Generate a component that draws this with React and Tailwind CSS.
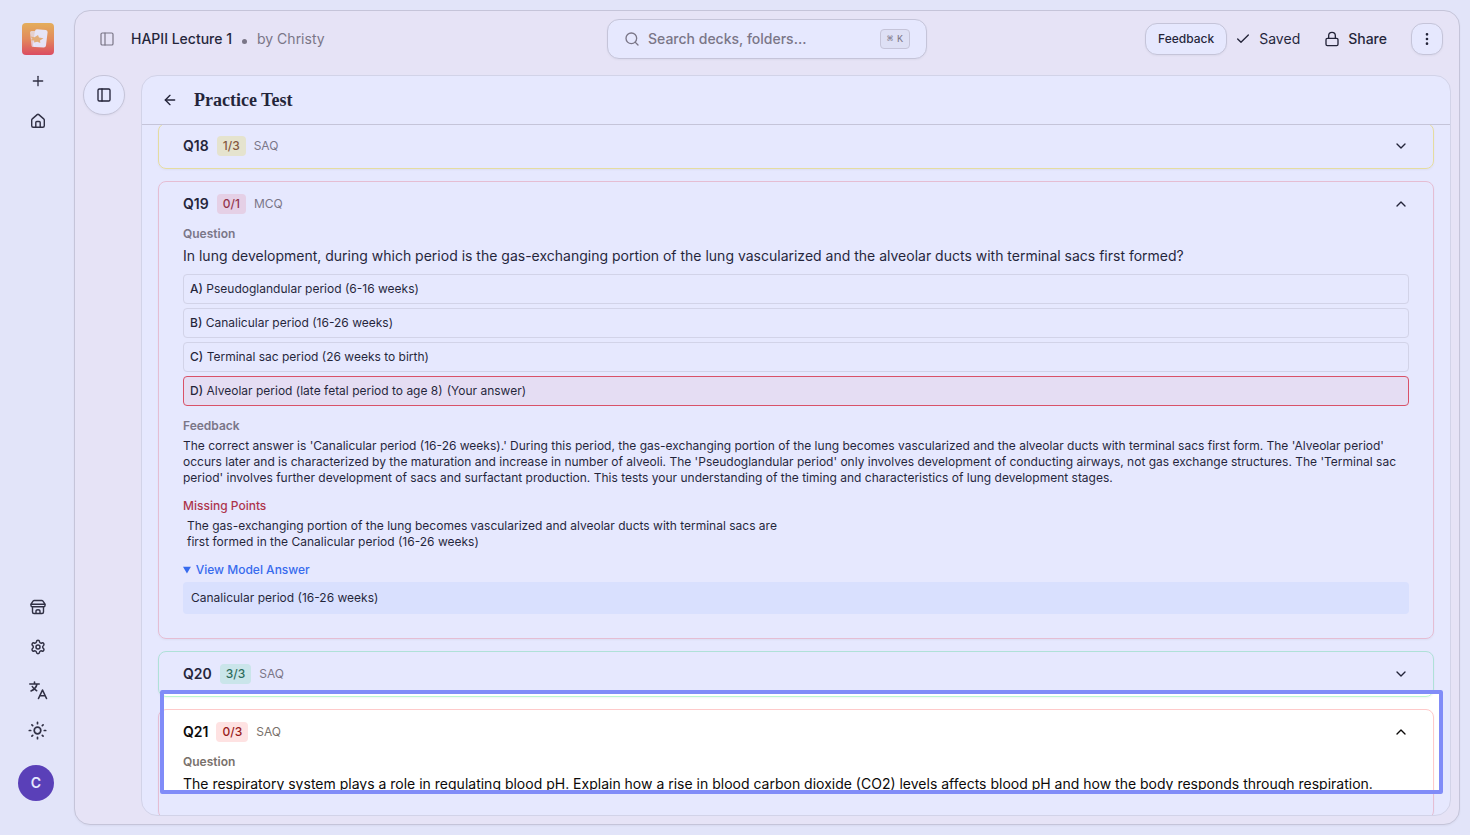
import { useState } from "react";
import {
  ArrowLeft,
  Check,
  ChevronDown,
  ChevronUp,
  EllipsisVertical,
  Lock,
  PanelLeft,
  Plus,
  Search,
} from "lucide-react";

const SCORE_STYLES = {
  none: { card: "border-[#fecaca]", badge: "bg-[#fee2e2] text-[#991b1b]" },
  partial: { card: "border-[#fef08a]", badge: "bg-[#fef9c3] text-[#854d0e]" },
  full: { card: "border-[#bbf7d0]", badge: "bg-[#dcfce7] text-[#166534]" },
};

const QUESTIONS = [
  { number: 18, score: "1/3", type: "SAQ", result: "partial" },
  {
    number: 19,
    score: "0/1",
    type: "MCQ",
    result: "none",
    open: true,
    text: "In lung development, during which period is the gas-exchanging portion of the lung vascularized and the alveolar ducts with terminal sacs first formed?",
    options: [
      { key: "A", label: "Pseudoglandular period (6-16 weeks)" },
      { key: "B", label: "Canalicular period (16-26 weeks)" },
      { key: "C", label: "Terminal sac period (26 weeks to birth)" },
      { key: "D", label: "Alveolar period (late fetal period to age 8)", chosen: true },
    ],
    feedback:
      "The correct answer is 'Canalicular period (16-26 weeks).' During this period, the gas-exchanging portion of the lung becomes vascularized and the alveolar ducts with terminal sacs first form. The 'Alveolar period' occurs later and is characterized by the maturation and increase in number of alveoli. The 'Pseudoglandular period' only involves development of conducting airways, not gas exchange structures. The 'Terminal sac period' involves further development of sacs and surfactant production. This tests your understanding of the timing and characteristics of lung development stages.",
    missing:
      "The gas-exchanging portion of the lung becomes vascularized and alveolar ducts with terminal sacs are first formed in the Canalicular period (16-26 weeks)",
    model: "Canalicular period (16-26 weeks)",
  },
  { number: 20, score: "3/3", type: "SAQ", result: "full" },
  {
    number: 21,
    score: "0/3",
    type: "SAQ",
    result: "none",
    open: true,
    text: "The respiratory system plays a role in regulating blood pH. Explain how a rise in blood carbon dioxide (CO2) levels affects blood pH and how the body responds through respiration.",
  },
];

function Logo() {
  return (
    <svg viewBox="0 0 32 32" className="size-8" aria-hidden="true">
      <defs>
        <linearGradient id="logo-bg" x1="0" y1="0" x2="0" y2="1">
          <stop offset="0" stopColor="#fdb735" />
          <stop offset="0.5" stopColor="#fb8a35" />
          <stop offset="1" stopColor="#f23c3c" />
        </linearGradient>
      </defs>
      <rect width="32" height="32" rx="4" fill="url(#logo-bg)" />
      <path d="M8 9.500q0-1.500 1.500-1.500H13v16h-2q-1.300 0-1.500-1.500z" fill="#fff" opacity="0.7" />
      <path d="M13 8q.2-2 2.200-1.800l8.600.8q2 .2 1.800 2.200L24 22.500q-.3 2-2.200 2L13 24q-2-.1-2-2z" fill="#fff" opacity="0.95" />
      <path d="M8.500 13.500l4 .8 3.500-2.300 1 2.500 4.500.7-3.500 2.300.3 2.500-3-1.200-3.300.7.200-2-3.700-.3 2-1.500z" fill="#fbb659" />
    </svg>
  );
}

function HomeIcon() {
  return (
    <svg viewBox="0 0 16 16" className="size-4" fill="none" stroke="currentColor" strokeWidth="1.4" strokeLinecap="round" strokeLinejoin="round" aria-hidden="true">
      <path d="M1.700 7.200q0-.8.6-1.300L7.200 1.600q.8-.7 1.600 0l4.900 4.300q.6.5.6 1.300v5.600q0 1.500-1.500 1.500H3.200q-1.500 0-1.500-1.500z" />
      <path d="M5.800 14.200V9.500q0-1 1-1h2.400q1 0 1 1v4.700" />
    </svg>
  );
}

function StoreIcon() {
  return (
    <svg viewBox="0 0 16 16" className="size-4" fill="none" stroke="currentColor" strokeWidth="1.4" strokeLinecap="round" strokeLinejoin="round" aria-hidden="true">
      <path d="M1 5.200 3 2.200Q3.500 1.500 4.300 1.500h7.400q.8 0 1.300.7l2 3z" />
      <path d="M1 5.500v1q0 1.200 1.200 1.200h11.600Q15 7.700 15 6.500v-1" />
      <path d="M2.500 8v5q0 1.500 1.500 1.500h8q1.500 0 1.500-1.500V8" />
      <path d="M6 14.300v-2q0-1.600 2-1.600t2 1.600v2" />
    </svg>
  );
}

function SettingsIcon() {
  return (
    <svg viewBox="0 0 24 24" className="size-4" fill="none" stroke="currentColor" strokeWidth="2.200" strokeLinecap="round" strokeLinejoin="round" aria-hidden="true">
      <path d="M9.671 4.136a2.340 2.340 0 0 1 4.659 0 2.340 2.340 0 0 0 3.319 1.915 2.340 2.340 0 0 1 2.330 4.033 2.340 2.340 0 0 0 0 3.831 2.340 2.340 0 0 1-2.330 4.033 2.340 2.340 0 0 0-3.319 1.915 2.340 2.340 0 0 1-4.659 0 2.340 2.340 0 0 0-3.320-1.915 2.340 2.340 0 0 1-2.330-4.033 2.340 2.340 0 0 0 0-3.831A2.340 2.340 0 0 1 6.350 6.051a2.340 2.340 0 0 0 3.319-1.915" />
      <circle cx="12" cy="12" r="3" />
    </svg>
  );
}

function LanguageIcon() {
  return (
    <svg viewBox="0 0 20 20" className="size-5" fill="none" stroke="currentColor" strokeWidth="1.600" strokeLinecap="round" strokeLinejoin="round" aria-hidden="true">
      <path d="M1.800 4h9.400M6.500 2v2M9 4c-.6 3-2.800 5.500-6 7M4.300 6.500c.9 1.800 2.500 3.300 4.400 4.200" />
      <path d="M10.500 18.500l4-8.500 4 8.500M11.800 15.800h5.400" />
    </svg>
  );
}

function SunIcon() {
  return (
    <svg viewBox="0 0 20 20" className="size-5" fill="none" stroke="currentColor" strokeWidth="1.700" strokeLinecap="round" aria-hidden="true">
      <circle cx="9.500" cy="10.500" r="3.300" />
      <path d="M9.500 2.300v1.400M9.500 17.300v1.400M1.300 10.500h1.400M16.300 10.500h1.400M3.900 4.900l.8.8M14.300 15.300l.8.8M15.100 4.900l-.8.8M4.700 15.300l-.8.8" />
    </svg>
  );
}

function SideButton({ label, children }) {
  return (
    <button type="button" aria-label={label} className="flex size-10 items-center justify-center text-[#1c1917]">
      {children}
    </button>
  );
}

function Sidebar() {
  return (
    <nav className="flex w-[74px] shrink-0 flex-col items-center pt-[23px] pb-[34px] pl-0.5">
      <a href="#home" aria-label="Home" className="mb-1.5">
        <Logo />
      </a>
      <SideButton label="Create">
        <Plus className="size-4" />
      </SideButton>
      <SideButton label="Dashboard">
        <HomeIcon />
      </SideButton>
      <div className="flex-1" />
      <SideButton label="Store">
        <StoreIcon />
      </SideButton>
      <SideButton label="Settings">
        <SettingsIcon />
      </SideButton>
      <div className="h-[3px]" />
      <SideButton label="Language">
        <LanguageIcon />
      </SideButton>
      <SideButton label="Theme">
        <SunIcon />
      </SideButton>
      <button
        type="button"
        aria-label="Account"
        className="mt-[15px] mr-1 flex size-9 items-center justify-center rounded-full bg-[#512da8] text-sm font-semibold text-white"
      >
        C
      </button>
    </nav>
  );
}

function TopBar() {
  return (
    <header className="grid grid-cols-[1fr_320px_1fr] items-center px-4 pt-2">
      <div className="flex items-center pl-2">
        <button type="button" aria-label="Toggle sidebar" className="mr-4 text-[#79716b]">
          <PanelLeft className="size-4" strokeWidth={1.800} />
        </button>
        <span className="text-sm font-medium">HAPII Lecture 1</span>
        <span className="mx-2.5 mt-1 size-[5px] rounded-full bg-[#79716b]" />
        <span className="text-sm text-[#79716b]">by Christy</span>
      </div>
      <label className="flex h-10 items-center rounded-xl border border-[#d6d3d1] bg-white px-4 shadow-xs">
        <Search className="size-4 shrink-0 text-[#79716b]" />
        <input
          type="text"
          aria-label="Search"
          placeholder="Search decks, folders..."
          className="ml-2 min-w-0 flex-1 text-sm font-medium outline-none placeholder:text-[#79716b]"
        />
        <kbd className="flex h-5 items-center gap-1 rounded border border-[#d6d3d1] bg-[#f5f5f4] px-1.5 font-['Liberation_Mono',monospace] text-[10px] text-[#79716b]">
          <span>⌘</span>
          <span>K</span>
        </kbd>
      </label>
      <div className="flex items-center justify-end text-sm font-medium">
        <button type="button" className="h-8 rounded-xl border border-[#d6d3d1] bg-white px-3 text-xs shadow-xs">
          Feedback
        </button>
        <Check className="ml-2 size-4" />
        <span className="ml-2 font-normal">Saved</span>
        <button type="button" className="mx-6 flex items-center gap-2">
          <Lock className="size-4" />
          Share
        </button>
        <button
          type="button"
          aria-label="More"
          className="flex size-8 items-center justify-center rounded-xl border border-[#d6d3d1] bg-white shadow-xs"
        >
          <EllipsisVertical className="size-4" />
        </button>
      </div>
    </header>
  );
}

function Label({ children }) {
  return <h3 className="text-xs font-semibold text-[#79716b]">{children}</h3>;
}

function QuestionCard({ question }) {
  const [open, setOpen] = useState(Boolean(question.open));
  const styles = SCORE_STYLES[question.result];
  const Chevron = open ? ChevronUp : ChevronDown;

  return (
    <section className={`shrink-0 rounded-lg border px-6 shadow-xs ${styles.card}`}>
      <button
        type="button"
        aria-expanded={open}
        onClick={() => setOpen(!open)}
        className="flex h-11 w-full items-center gap-2 text-left"
      >
        <span className="text-sm font-semibold">Q{question.number}</span>
        <span className={`rounded-sm px-1.5 py-0.5 text-xs font-medium ${styles.badge}`}>{question.score}</span>
        <span className="text-xs text-[#79716b]">{question.type}</span>
        <Chevron className="ml-auto size-4" />
      </button>

      {open && (
        <div className="pb-6">
          <Label>Question</Label>
          <p className="mt-1 text-sm">{question.text}</p>

          {question.options && (
            <ul className="mt-2 space-y-1">
              {question.options.map((option) => (
                <li
                  key={option.key}
                  className={`rounded-sm border px-1.5 py-1.5 text-xs ${
                    option.chosen ? "border-[#ef4444] bg-[#fef2f2]" : "border-[#e7e5e4]"
                  }`}
                >
                  <span className="font-medium">{option.key})</span> {option.label}
                  {option.chosen && <span className="ml-1">(Your answer)</span>}
                </li>
              ))}
            </ul>
          )}

          {question.feedback && (
            <div className="mt-3">
              <Label>Feedback</Label>
              <p className="mt-1 text-xs">{question.feedback}</p>
            </div>
          )}

          {question.missing && (
            <div className="mt-3">
              <h3 className="text-xs font-medium text-[#b91c1c]">Missing Points</h3>
              <p className="mt-1 max-w-[600px] pl-1 text-xs">{question.missing}</p>
            </div>
          )}

          {question.model && (
            <details open className="mt-3 text-xs">
              <summary className="cursor-pointer font-medium text-[#2563eb]">View Model Answer</summary>
              <p className="mt-1 rounded-sm bg-[#eff6ff] p-2">{question.model}</p>
            </details>
          )}
        </div>
      )}
    </section>
  );
}

export default function App() {
  return (
    <div className="relative flex h-screen overflow-hidden bg-[#fafaf9] font-['Inter',sans-serif] text-[#0c0a09]">
      <Sidebar />
      <div className="my-2.5 mr-2.5 flex min-w-0 flex-1 flex-col rounded-2xl border border-[#d6d3d1] bg-[#fff9f5] shadow-xs">
        <TopBar />
        <div className="mt-4 flex min-h-0 flex-1 px-2 pb-2">
          <button
            type="button"
            aria-label="Open panel"
            className="mr-4 flex h-10 w-[42px] shrink-0 items-center justify-center rounded-full border border-[#d6d3d1] bg-white shadow-xs"
          >
            <PanelLeft className="size-4" />
          </button>
          <main className="flex min-w-0 flex-1 flex-col overflow-hidden rounded-2xl border border-[#e7e5e4] bg-white">
            <div className="flex h-[49px] shrink-0 items-center gap-4 border-b border-[#d6d3d1] px-5">
              <button type="button" aria-label="Back">
                <ArrowLeft className="size-4" />
              </button>
              <h1 className="font-['Liberation_Serif',serif] text-lg font-bold">Practice Test</h1>
            </div>
            <div className="flex min-h-0 flex-1 flex-col justify-end overflow-hidden px-4">
              <div className="flex h-[692px] shrink-0 flex-col gap-3">
                {QUESTIONS.map((question) => (
                  <QuestionCard key={question.number} question={question} />
                ))}
              </div>
            </div>
          </main>
        </div>
      </div>

      {/* capture frame: dims everything outside the selected area */}
      <div className="pointer-events-none absolute top-[690px] right-[27px] left-40 h-[104px] rounded-xs border-4 border-[#818cf8] shadow-[0_0_0_2000px_rgba(129,140,248,0.2)]" />
    </div>
  );
}
